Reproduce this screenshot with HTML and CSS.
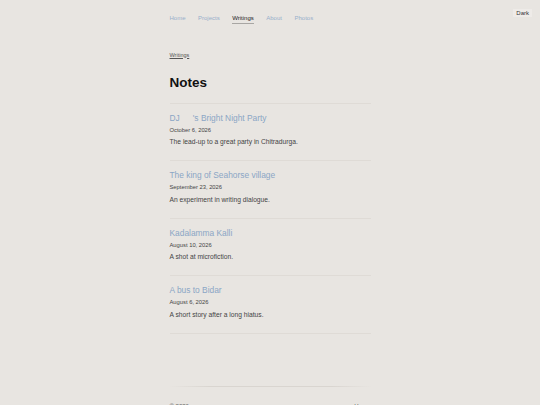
FILE: index.html
```html
<!DOCTYPE html>
<html lang="en">
<head>
  <meta charset="UTF-8" />
  <meta name="viewport" content="width=device-width, initial-scale=1.0" />
  <title>Notes</title>
  <link rel="stylesheet" href="styles.css">
</head>
<body>
  <button class="theme-toggle" type="button">Dark</button>

  <div class="page">
    <nav class="nav">
      <a href="#">Home</a>
      <a href="#">Projects</a>
      <a href="#" class="active">Writings</a>
      <a href="#">About</a>
      <a href="#">Photos</a>
    </nav>

    <div class="crumbs">
      <a href="#">Writings</a>
    </div>

    <div class="heading">
      <h1>Notes</h1>
    </div>

    <ul class="posts">
      <li class="post">
        <a href="#" class="post-title">DJ &emsp; 's Bright Night Party</a>
        <div class="post-date">October 6, 2026</div>
        <p class="post-desc">The lead-up to a great party in Chitradurga.</p>
      </li>
      <li class="post">
        <a href="#" class="post-title">The king of Seahorse village</a>
        <div class="post-date">September 23, 2026</div>
        <p class="post-desc">An experiment in writing dialogue.</p>
      </li>
      <li class="post">
        <a href="#" class="post-title">Kadalamma Kalli</a>
        <div class="post-date">August 10, 2026</div>
        <p class="post-desc">A shot at microfiction.</p>
      </li>
      <li class="post">
        <a href="#" class="post-title">A bus to Bidar</a>
        <div class="post-date">August 6, 2026</div>
        <p class="post-desc">A short story after a long hiatus.</p>
      </li>
    </ul>

    <footer class="footer">
      <span>&copy; 2026</span>
      <span>H</span>
    </footer>
  </div>
</body>
</html>
```

FILE: styles.css
```css
* {
  box-sizing: border-box;
  margin: 0;
  padding: 0;
}

body {
  background-color: #e8e5e1;
  color: #333;
  font-family: "Liberation Sans", Arial, sans-serif;
}

a {
  text-decoration: none;
}

.theme-toggle {
  position: absolute;
  top: 9px;
  right: 8px;
  background: #eeebe8;
  border: none;
  color: #333;
  font-family: "Liberation Sans", Arial, sans-serif;
  font-size: 6px;
  line-height: 8px;
  padding: 0 3px;
  cursor: pointer;
}

.page {
  width: 201px;
  margin: 0 auto;
}

.nav {
  display: flex;
  gap: 12.5px;
  padding-top: 12.5px;
}

.nav a {
  font-size: 6px;
  line-height: 10px;
  color: #98afcb;
}

.nav a.active {
  color: #222;
  border-bottom: 1.5px solid #a8a6a3;
}

.crumbs {
  margin-top: 27px;
  font-size: 5.5px;
  line-height: 8px;
}

.crumbs a {
  color: #555;
  text-decoration: underline;
}

.heading {
  padding-top: 16px;
  padding-bottom: 12px;
  border-bottom: 1px solid #dfdbd6;
}

h1 {
  font-size: 13.5px;
  line-height: 16px;
  font-weight: bold;
  color: #111;
}

.posts {
  list-style: none;
}

.post {
  padding: 9px 0 14px;
  border-bottom: 1px solid #dfdbd6;
}

.post-title {
  display: block;
  font-size: 8.4px;
  line-height: 11px;
  color: #8ba6c5;
}

.post-date {
  margin-top: 3px;
  font-size: 5.8px;
  line-height: 7px;
  color: #444;
}

.post-desc {
  margin-top: 3.5px;
  font-size: 6.7px;
  line-height: 9px;
  color: #444;
}

.footer {
  display: flex;
  justify-content: space-between;
  margin-top: 52px;
  padding: 15px 12px 20px 0;
  border-top: 1px solid transparent;
  border-image: linear-gradient(90deg, transparent, #d9d5d0 20%, #d9d5d0 80%, transparent) 1;
  font-size: 6px;
  line-height: 8px;
  color: #555;
}
```
